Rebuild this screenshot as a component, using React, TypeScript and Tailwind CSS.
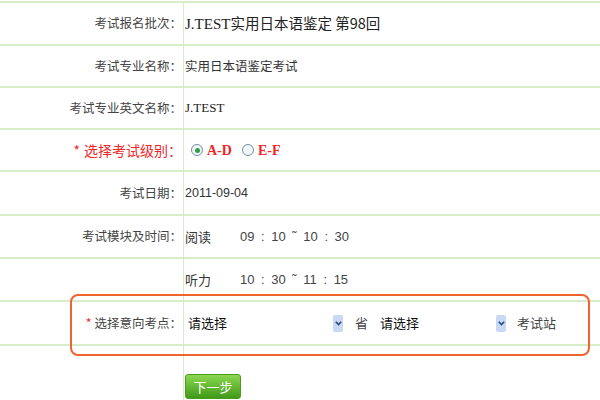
import React from "react";

const CJK = { fontFamily: '"Noto Sans CJK SC", "Liberation Sans", sans-serif' };
const LATIN = { fontFamily: '"Liberation Serif", "Noto Sans CJK SC", serif' };

function Row({
  label,
  children,
  className = "h-[42px]",
}: {
  label?: React.ReactNode;
  children?: React.ReactNode;
  className?: string;
}) {
  return (
    <div className={`flex border-b-2 border-[#d6edc8] ${className}`}>
      <div className="flex w-[184px] shrink-0 items-center justify-end whitespace-nowrap border-r border-[#d6edc8] pr-[1px] text-[12.5px] text-[#444]">
        {label}
      </div>
      <div className="flex flex-1 items-center whitespace-nowrap pl-[1px] text-[12.5px] text-[#333]">{children}</div>
    </div>
  );
}

function Radio({ checked }: { checked?: boolean }) {
  return (
    <span className="flex h-[12px] w-[12px] items-center justify-center rounded-full border border-[#6f8fae] bg-[#f4f7fa]">
      {checked && <span className="h-[5px] w-[5px] rounded-full bg-[#2ea043]" />}
    </span>
  );
}

function Arrow() {
  return (
    <span className="flex h-[17px] w-[10px] shrink-0 items-center justify-center rounded-[2px] bg-[#c9d8f4]">
      <svg width="7" height="5" viewBox="0 0 7 5">
        <path d="M0.8 0.8 L3.5 3.6 L6.2 0.8" fill="none" stroke="#2a4a8a" strokeWidth="1.6" />
      </svg>
    </span>
  );
}

function Time({ text }: { text: string }) {
  return (
    <span className="ml-[28px] whitespace-pre text-[13px] text-[#444]" style={{ fontFamily: '"Liberation Sans", sans-serif', wordSpacing: "3px" }}>
      {text}
    </span>
  );
}

export default function App() {
  return (
    <div className="h-[400px] w-[600px] overflow-hidden bg-white pt-[1px]" style={CJK}>
      <div className="border-t-2 border-[#d6edc8]">
        <Row label="考试报名批次：" className="h-[43px]">
          <span className="text-[14.5px] text-[#222]">
            <span style={LATIN} className="text-[15px]">J.TEST</span>实用日本语鉴定 第98回
          </span>
        </Row>
        <Row label="考试专业名称：">实用日本语鉴定考试</Row>
        <Row label="考试专业英文名称：">
          <span style={LATIN} className="text-[13px] text-[#222]">J.TEST</span>
        </Row>
        <Row
          label={
            <span className="text-[14px] text-[#f02626]">
              <span className="mr-[4px]">*</span>选择考试级别：
            </span>
          }
        >
          <div className="ml-[6px] flex items-center gap-[3px] text-[14px] text-[#f02626]" style={LATIN}>
            <Radio checked />
            <span className="ml-[1px] font-bold">A-D</span>
            <span className="ml-[4px]" />
            <Radio />
            <span className="ml-[1px] font-bold">E-F</span>
          </div>
        </Row>
        <Row label="考试日期：" className="h-[44px]">
          <span style={{ fontFamily: '"Liberation Sans", sans-serif' }} className="text-[12.5px] text-[#333]">
            2011-09-04
          </span>
        </Row>
        <Row label="考试模块及时间：" className="h-[43px]">
          <span className="w-[27px] shrink-0 text-[13px]">阅读</span>
          <Time text="09 : 10 ˜ 10 : 30" />
        </Row>
        <Row className="h-[43px]">
          <span className="w-[27px] shrink-0 text-[13px]">听力</span>
          <Time text="10 : 30 ˜ 11 : 15" />
        </Row>
        <div className="relative">
          <Row
            className="h-[44px]"
            label={
              <span className="text-[12.5px] text-[#444]">
                <span className="mr-[3px] text-[#f02626]">*</span>选择意向考点：
              </span>
            }
          >
            <div className="flex items-center pl-[3px] text-[13px] text-[#111]">
              <span className="w-[145px]">请选择</span>
              <Arrow />
              <span className="ml-[12px] text-[#444]">省</span>
              <span className="ml-[12px] w-[116px]">请选择</span>
              <Arrow />
              <span className="ml-[11px] text-[#444]">考试站</span>
            </div>
          </Row>
          <div className="pointer-events-none absolute left-[70px] right-[10px] top-[-8px] bottom-[-10px] rounded-[8px] border-2 border-[#f0622e]" />
        </div>
        <div className="flex h-[60px]">
          <div className="w-[184px] shrink-0 border-r border-[#d6edc8]" />
          <div className="pt-[28px] pl-[1px]">
            <button
              className="flex h-[25px] w-[56px] items-center justify-center rounded-[3px] border border-[#4a9a1e] bg-gradient-to-b from-[#8bd84f] to-[#3f9a17] text-[13px] text-white"
              style={CJK}
            >
              下一步
            </button>
          </div>
        </div>
      </div>
    </div>
  );
}
